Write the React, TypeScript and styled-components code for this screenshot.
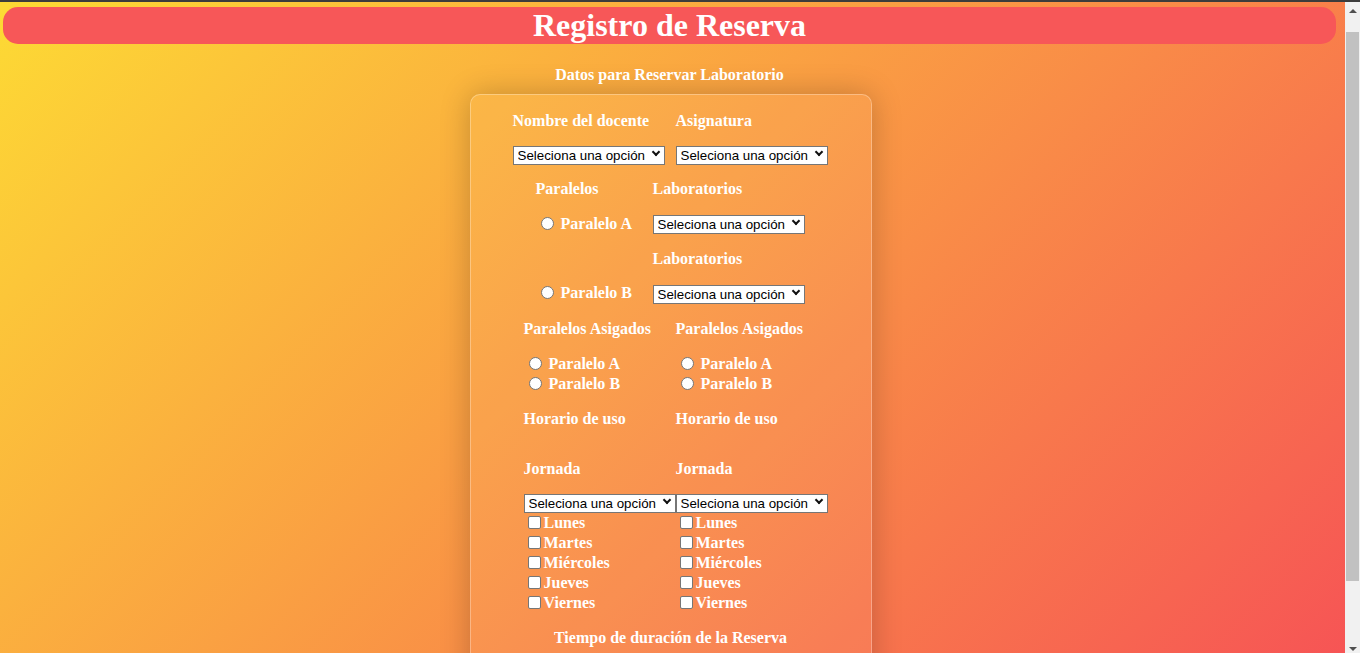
import React from "react";
import styled, { createGlobalStyle } from "styled-components";

const GlobalStyle = createGlobalStyle`
  html {
    background: #f1f1f1;
  }
  body {
    margin: 0 15px 0 0;
    padding-bottom: 8px;
    background: linear-gradient(135deg, #fdda34 0%, #f65056 100%);
    font-family: "Liberation Serif", "Times New Roman", serif;
    color: #fff;
  }
`;

const ChromeEdge = styled.div`
  position: fixed;
  top: 0;
  left: 0;
  right: 0;
  height: 2px;
  background: #3c3c3c;
  z-index: 10;
`;

/* the page scrollbar, drawn over the right edge */
const Rail = styled.div`
  position: fixed;
  top: 2px;
  right: 0;
  bottom: 0;
  width: 15px;
  display: flex;
  flex-direction: column;
  background: #f1f1f1;
  z-index: 5;
`;

const RailButton = styled.div<{ $height: number; $pad: number }>`
  display: flex;
  justify-content: center;
  box-sizing: border-box;
  height: ${(p) => p.$height}px;
  padding-top: ${(p) => p.$pad}px;
`;

const Arrow = styled.span<{ $down?: boolean }>`
  width: 0;
  height: 0;
  border-left: 4px solid transparent;
  border-right: 4px solid transparent;
  ${(p) => (p.$down ? "border-top" : "border-bottom")}: 4px solid #505050;
`;

const Thumb = styled.div`
  height: 549px;
  margin: 0 1px;
  background: #c1c1c1;
`;

const RailSpace = styled.div`
  flex: 1;
`;

const Page = styled.div`
  margin: 0 9px 0 3px;
  padding-top: 7px;
`;

const Banner = styled.header`
  height: 37px;
  background: #f75758;
  border-radius: 15px;
`;

const Title = styled.h1`
  margin: 0;
  font-size: 32px;
  line-height: 37px;
  font-weight: bold;
  text-align: center;
`;

const Subtitle = styled.h2`
  margin: 22px 0 0;
  font-size: 16px;
  line-height: 18px;
  font-weight: bold;
  text-align: center;
`;

const FormArea = styled.div`
  padding-left: 2px;
`;

const Card = styled.form`
  width: 400px;
  margin: 10px auto 0;
  padding: 17px 0 64px;
  border: 1px solid rgba(255, 255, 255, 0.3);
  border-radius: 10px;
  background: rgba(255, 255, 255, 0.05);
  box-shadow: 0 0 30px rgba(0, 0, 0, 0.22);
`;

const Pair = styled.div<{ $indent: number; $top?: number }>`
  display: flex;
  padding-left: ${(p) => p.$indent}px;
  margin-top: ${(p) => p.$top ?? 0}px;
`;

const Column = styled.div<{ $width: number }>`
  display: flex;
  flex-direction: column;
  align-items: flex-start;
  width: ${(p) => p.$width}px;
`;

const Split = styled.div<{ $indent: number; $first: number; $top: number }>`
  display: grid;
  grid-template-columns: ${(p) => p.$first}px auto;
  grid-template-rows: 18px 20px 18px 20px;
  justify-content: start;
  align-items: center;
  row-gap: 16px;
  padding-left: ${(p) => p.$indent}px;
  margin-top: ${(p) => p.$top}px;
`;

const Heading = styled.div<{ $before?: number; $after?: number }>`
  font-size: 16px;
  line-height: 18px;
  font-weight: bold;
  white-space: nowrap;
  margin-top: ${(p) => p.$before ?? 0}px;
  margin-bottom: ${(p) => p.$after ?? 0}px;
`;

const PickerWrap = styled.span`
  position: relative;
  display: inline-block;
  width: 152px;
  height: 19px;

  &::after {
    content: "";
    position: absolute;
    top: 3px;
    right: 6px;
    width: 4px;
    height: 4px;
    border-right: 2px solid #111;
    border-bottom: 2px solid #111;
    transform: rotate(45deg);
    pointer-events: none;
  }
`;

const Picker = styled.select`
  appearance: none;
  box-sizing: border-box;
  display: block;
  width: 152px;
  height: 19px;
  margin: 0;
  padding: 0 0 0 4px;
  border: 1px solid #767676;
  border-radius: 0;
  background: #fff;
  font-family: "Liberation Sans", Arial, sans-serif;
  font-size: 13.333px;
  color: #000;
`;

const Choice = styled.label<{ $lift?: number }>`
  display: flex;
  align-items: flex-start;
  height: 20px;
  margin-top: ${(p) => -(p.$lift ?? 0)}px;
  font-size: 16px;
  line-height: 20px;
  font-weight: bold;
  white-space: nowrap;
`;

const Radio = styled.input.attrs({ type: "radio" })`
  appearance: none;
  box-sizing: border-box;
  width: 13px;
  height: 13px;
  margin: 3px 3px 0 5px;
  border: 1px solid #767676;
  border-radius: 50%;
  background: #fff;
`;

const Check = styled.input.attrs({ type: "checkbox" })`
  appearance: none;
  box-sizing: border-box;
  width: 13px;
  height: 13px;
  margin: 3px 3px 3px 4px;
  border: 1px solid #767676;
  border-radius: 2px;
  background: #fff;
`;

const ChoiceText = styled.span<{ $space?: boolean }>`
  margin-left: ${(p) => (p.$space ? 4 : 0)}px;
`;

const Footer = styled.div`
  margin-top: 16px;
  font-size: 16px;
  line-height: 18px;
  font-weight: bold;
  text-align: center;
`;

const days = ["Lunes", "Martes", "Miércoles", "Jueves", "Viernes"];

const Select = () => (
  <PickerWrap>
    <Picker defaultValue="">
      <option value="">Seleciona una opción</option>
    </Picker>
  </PickerWrap>
);

const ScheduleColumn = ({ group }: { group: string }) => (
  <Column $width={152}>
    <Heading $after={16}>Paralelos Asigados</Heading>
    {["A", "B"].map((p) => (
      <Choice key={p}>
        <Radio name={`asig-${group}`} />
        <ChoiceText $space>Paralelo {p}</ChoiceText>
      </Choice>
    ))}
    <Heading $before={16} $after={32}>
      Horario de uso
    </Heading>
    <Heading $after={16}>Jornada</Heading>
    <Select />
    {days.map((d) => (
      <Choice key={d}>
        <Check />
        <ChoiceText>{d}</ChoiceText>
      </Choice>
    ))}
  </Column>
);

export default function App() {
  return (
    <>
      <GlobalStyle />
      <ChromeEdge />
      <Rail>
        <RailButton $height={30} $pad={7}>
          <Arrow />
        </RailButton>
        <Thumb />
        <RailSpace />
        <RailButton $height={17} $pad={11}>
          <Arrow $down />
        </RailButton>
      </Rail>
      <Page>
        <Banner>
          <Title>Registro de Reserva</Title>
        </Banner>
        <Subtitle>Datos para Reservar Laboratorio</Subtitle>
        <FormArea>
          <Card>
            <Pair $indent={42}>
              <Column $width={163}>
                <Heading $after={16}>Nombre del docente</Heading>
                <Select />
              </Column>
              <Column $width={160}>
                <Heading $after={16}>Asignatura</Heading>
                <Select />
              </Column>
            </Pair>
            <Split $indent={65} $first={117} $top={15}>
              <Heading>Paralelos</Heading>
              <Heading>Laboratorios</Heading>
              <Choice>
                <Radio name="paralelo" />
                <ChoiceText $space>Paralelo A</ChoiceText>
              </Choice>
              <Select />
              <span />
              <Heading>Laboratorios</Heading>
              <Choice $lift={2}>
                <Radio name="paralelo" />
                <ChoiceText $space>Paralelo B</ChoiceText>
              </Choice>
              <Select />
            </Split>
            <Pair $indent={53} $top={16}>
              <ScheduleColumn group="a" />
              <ScheduleColumn group="b" />
            </Pair>
            <Footer>Tiempo de duración de la Reserva</Footer>
          </Card>
        </FormArea>
      </Page>
    </>
  );
}
